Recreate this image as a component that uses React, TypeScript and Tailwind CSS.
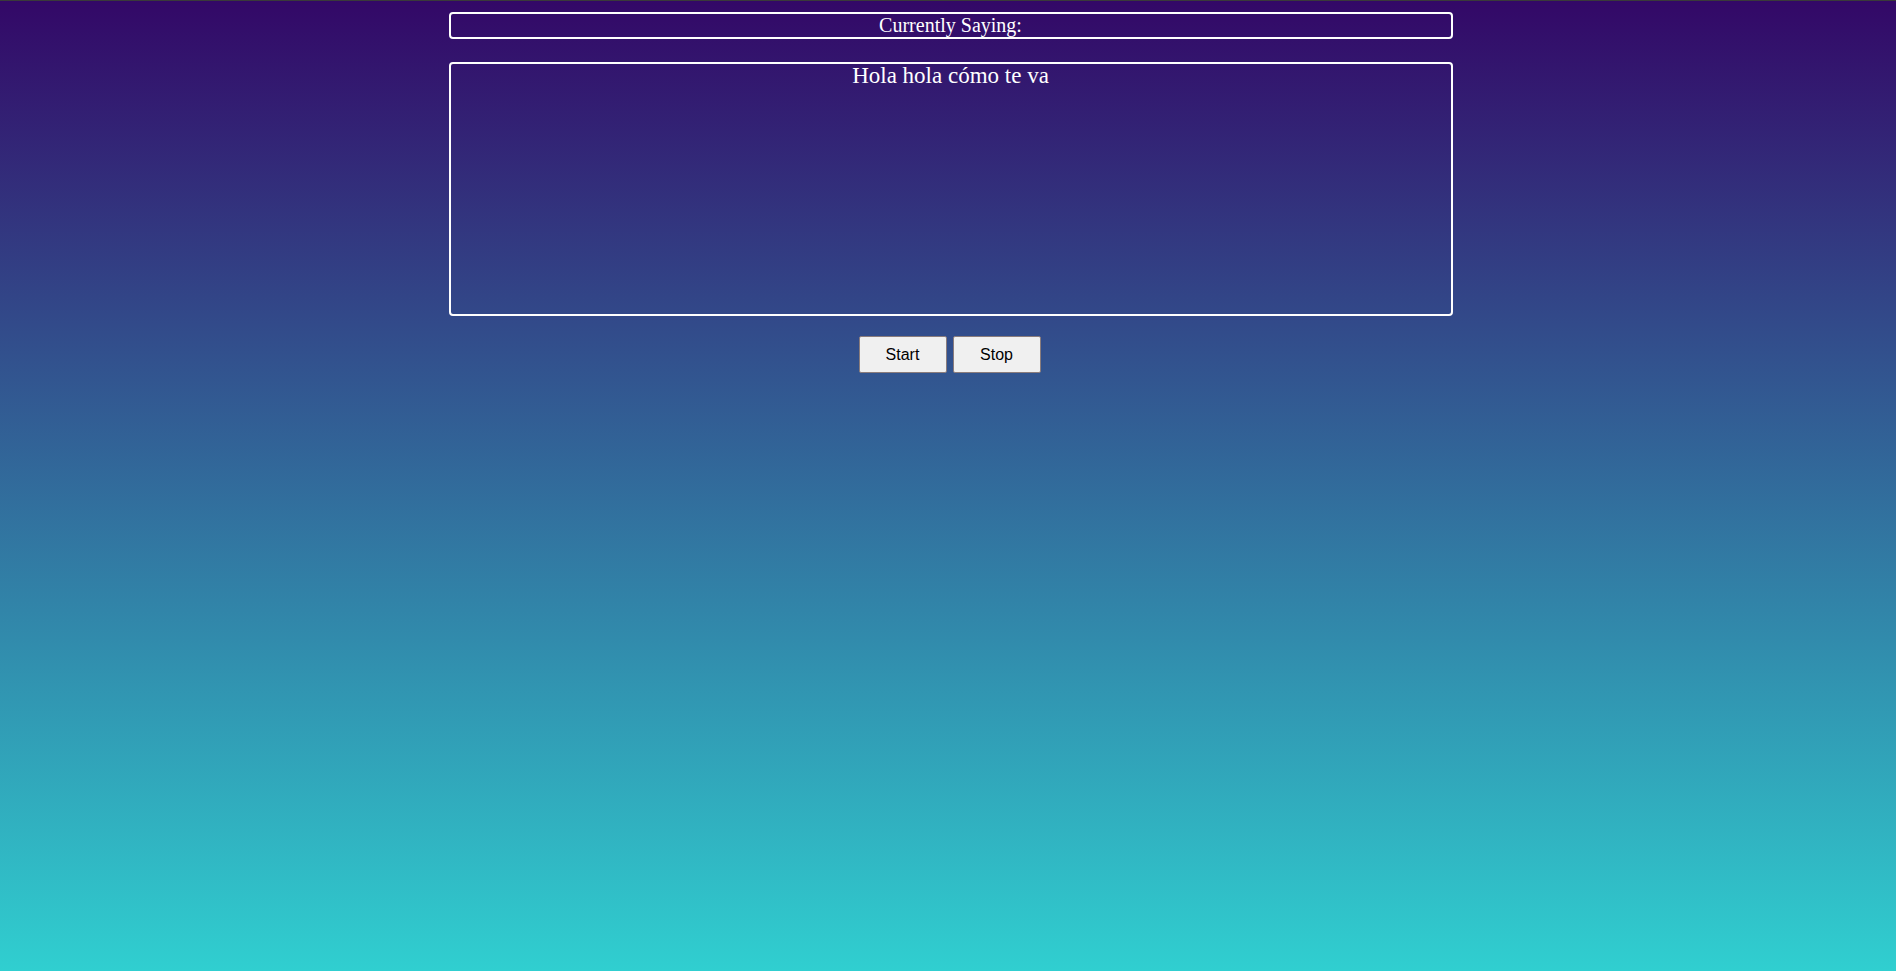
import React from "react";

export default function App() {
  return (
    <div className="h-screen w-full border-t border-[#3a3a3a] bg-[linear-gradient(to_top,#30cfd0_0%,#330867_100%)] pl-[5px]">
      <div className="mx-auto flex w-[1004px] flex-col items-center pt-[11px]">
        <div className="flex h-[27px] w-full items-center justify-center rounded-[4px] border-2 border-white text-[20px] leading-[23px] text-white [font-family:'Liberation_Serif','Times_New_Roman',serif]">
          Currently Saying:
        </div>
        <div className="mt-[23px] h-[254px] w-full rounded-[4px] border-2 border-white text-center text-[23px] leading-[24px] text-white [font-family:'Liberation_Serif','Times_New_Roman',serif]">
          Hola hola cómo te va
        </div>
        <div className="mt-[20px] -ml-[2px] flex gap-[6px]">
          <button className="h-[37px] w-[88px] rounded-[2px] border border-[#8a7c7c] bg-[#f0f0f0] text-[16px] text-black [font-family:'Liberation_Sans',Arial,sans-serif]">
            Start
          </button>
          <button className="h-[37px] w-[88px] rounded-[2px] border border-[#8a7c7c] bg-[#f0f0f0] text-[16px] text-black [font-family:'Liberation_Sans',Arial,sans-serif]">
            Stop
          </button>
        </div>
      </div>
    </div>
  );
}
